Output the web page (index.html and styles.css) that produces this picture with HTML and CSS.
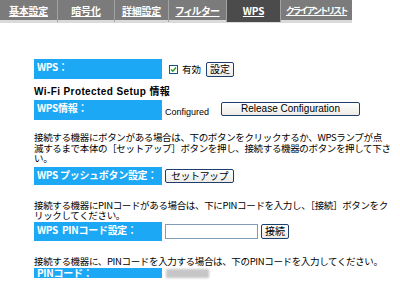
FILE: index.html
```html
<!DOCTYPE html>
<html lang="ja">
<head>
<meta charset="utf-8">
<title>WPS</title>
<link rel="stylesheet" href="styles.css">
</head>
<body>
<nav class="tabs">
  <a class="tab" href="#">基本設定</a>
  <a class="tab" href="#">暗号化</a>
  <a class="tab" href="#">詳細設定</a>
  <a class="tab" href="#">フィルター</a>
  <a class="tab active" href="#">WPS</a>
  <a class="tab tab-wide" href="#">クライアントリスト</a>
</nav>
<main class="content">
  <div class="row row-wps">
    <div class="label">WPS：</div>
    <div class="value">
      <span class="check"><svg width="7" height="7" viewBox="0 0 7 7"><path d="M1 3.5 L2.8 5.3 L6 1.5" fill="none" stroke="#21a121" stroke-width="1.4"/></svg></span>
      <span class="check-text">有効</span>
      <button class="btn btn-small">設定</button>
    </div>
  </div>
  <h2 class="heading">Wi-Fi Protected Setup 情報</h2>
  <div class="row row-info">
    <div class="label">WPS情報：</div>
    <div class="value">
      <span class="status">Configured</span>
      <button class="btn btn-release">Release Configuration</button>
    </div>
  </div>
  <p class="note note-1">接続する機器にボタンがある場合は、下のボタンをクリックするか、WPSランプが点<br>滅するまで本体の［セットアップ］ボタンを押し、接続する機器のボタンを押して下さ<br>い。</p>
  <div class="row row-push">
    <div class="label">WPS プッシュボタン設定：</div>
    <div class="value">
      <button class="btn btn-setup">セットアップ</button>
    </div>
  </div>
  <p class="note note-2">接続する機器にPINコードがある場合は、下にPINコードを入力し、［接続］ボタンをク<br>リックしてください。</p>
  <div class="row row-pin">
    <div class="label">WPS&nbsp;&nbsp;PINコード設定：</div>
    <div class="value">
      <input class="pin-input" type="text">
      <button class="btn btn-small btn-connect">接続</button>
    </div>
  </div>
  <p class="note note-3">接続する機器に、PINコードを入力する場合は、下のPINコードを入力してください。</p>
  <div class="row row-code">
    <div class="label">PINコード：</div>
    <div class="value">
      <span class="masked"></span>
    </div>
  </div>
</main>
</body>
</html>
```
FILE: styles.css
```css
html, body {
  margin: 0;
  padding: 0;
  overflow: hidden;
  background: #fff;
}
body {
  width: 400px;
  height: 281px;
  font-family: "Noto Sans CJK JP", "Liberation Sans", sans-serif;
  font-size: 10px;
  color: #000;
}
.tabs {
  display: grid;
  grid-template-columns: 58px 57px 54px 58px 54px 71px;
  width: 352px;
  height: 20px;
  background: #7b7b7b;
  border-bottom: 3px solid #dadada;
}
.tab {
  color: #fff;
  font-weight: bold;
  font-size: 10px;
  line-height: 22px;
  text-align: center;
  text-decoration: underline;
  border-right: 1px solid #a3a3a3;
  white-space: nowrap;
  font-feature-settings: "palt";
  letter-spacing: -0.2px;
}
.tab-wide {
  border-right: 0;
  font-size: 9px;
  letter-spacing: -1.2px;
}
.tab.active {
  background: #4b4b4b;
}
.content {
  display: flex;
  flex-direction: column;
  padding: 36px 0 0 34px;
}
.row {
  display: grid;
  grid-template-columns: 128px auto;
  column-gap: 3px;
}
.label {
  background: #1ca8f4;
  color: #fff;
  font-weight: bold;
  font-size: 10px;
  line-height: 12px;
  padding: 2px 3px 0;
  white-space: nowrap;
  letter-spacing: -0.3px;
}
.value {
  display: flex;
  align-items: center;
}
.row-wps { height: 20px; }
.row-info { height: 20px; }
.row-push { height: 18px; }
.row-pin { height: 19px; }
.row-code { height: 10px; }
.row-code .label {
  padding-top: 0;
  line-height: 10px;
}
.row-wps .value {
  padding-left: 4px;
}
.check {
  width: 7px;
  height: 7px;
  border: 1px solid #1c5180;
  background: #fff;
  display: flex;
  align-items: center;
  justify-content: center;
}
.check-text {
  margin-left: 4px;
  font-size: 9.5px;
}
.btn {
  font-family: "Noto Sans CJK JP", "Liberation Sans", sans-serif;
  font-size: 10px;
  color: #000;
  background: linear-gradient(#ffffff, #ecebe6);
  border: 1px solid #1e3f6e;
  border-radius: 2px;
  padding: 0;
  height: 15px;
  line-height: 12px;
}
.btn-small {
  margin-left: 5px;
  width: 28px;
}
.status {
  font-family: "Liberation Sans", sans-serif;
  font-size: 9px;
  padding-top: 4px;
  width: 56px;
}
.btn-release {
  font-family: "Liberation Sans", sans-serif;
  width: 139px;
  height: 14px;
  font-size: 10px;
  margin-top: -2px;
}
.heading {
  margin: 7px 0 2px;
  font-family: "Liberation Sans", "Noto Sans CJK JP", sans-serif;
  font-size: 10px;
  font-weight: bold;
  line-height: 12px;
  letter-spacing: 0.4px;
}
.note {
  margin: 0;
  font-size: 9.5px;
  line-height: 10.5px;
  letter-spacing: -0.35px;
  white-space: nowrap;
}
.note-1 { margin: 12px 0 3px; }
.note-2 { margin: 15px 0 1px; }
.note-3 { margin: 15px 0 2px; }
.btn-setup {
  width: 69px;
  height: 14px;
  letter-spacing: -0.5px;
}
.pin-input {
  width: 93px;
  height: 15px;
  box-sizing: border-box;
  border: 1px solid #7f9db9;
  padding: 0;
  margin: 0;
}
.btn-connect {
  margin-left: 3px;
}
.masked {
  display: block;
  width: 43px;
  height: 9px;
  margin-left: 1px;
  background: #c6c6c6;
  filter: blur(1px);
}
```
